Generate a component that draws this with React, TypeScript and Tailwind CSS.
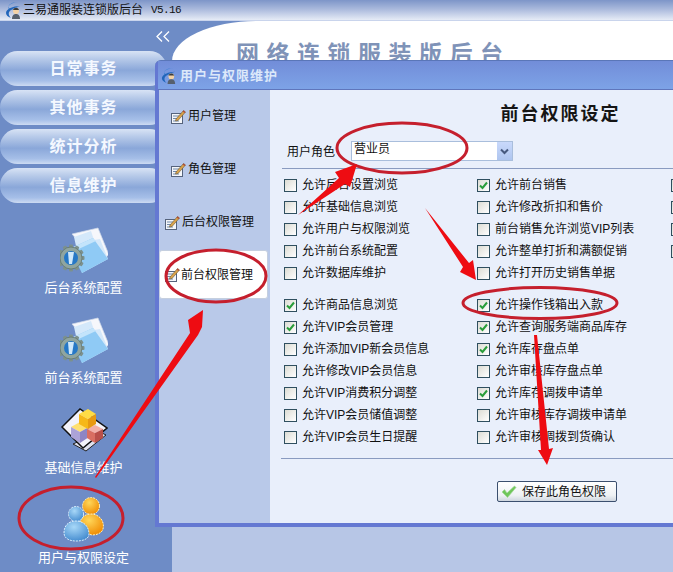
import React from "react";

const Logo = ({ size = 18 }: { size?: number }) => (
  <svg width={size} height={size} viewBox="0 0 18 18">
    <path d="M14 1C8 1 3 4 5 7c2 2 6 0 9-1-3 3-8 3-9 2C3 6 5 2 14 1Z" fill="#3a7fd0" />
    <path d="M16 5C9 5 2 8 2 12c0 2 2 4 5 5-3-3-3-6 0-8 2-2 6-3 9-4Z" fill="#2266bb" />
    <circle cx="12" cy="10" r="3" fill="#f3d2a6" />
    <path d="M8 18c0-4 2-5 4-5s4 1 4 5Z" fill="#56606e" />
    <path d="M9 9c1-3 5-3 6 0Z" fill="#3c3c3c" />
  </svg>
);

const Memo = () => (
  <svg width="15" height="15" viewBox="0 0 15 15" className="shrink-0">
    <rect x="0.5" y="4.5" width="11" height="10" fill="#f4f6fa" stroke="#55637c" />
    <path d="M2 7h6M2 9.500h5M2 12h6" stroke="#7188a8" />
    <path d="M5 10 12.500 1.500 14.500 3 7 11.500 4.500 12Z" fill="#d9a24a" stroke="#6a5a3a" strokeWidth="0.6" />
    <path d="M12.500 1.500 14.500 3 13.500 4 11.600 2.500Z" fill="#b24a3a" />
  </svg>
);

const GearFolder = () => (
  <svg width="48" height="48" viewBox="0 0 48 48">
    <path d="M12 9 38 3l11 27-13 7Z" fill="#f6f7fb" stroke="#cfd8ea" strokeWidth="0.7" />
    <path d="M14 12 31 6l3 9 6-1 8 20-26 14Z" fill="#d4e8fa" />
    <path d="M9 24 33 13l15 21-26 14Z" fill="#8fcaf5" />
    <path d="M9 24 33 13l3 3-24 11Z" fill="#c4e4fb" />
    <g transform="translate(11 33)">
      <g fill="#7c918d">
        {[0, 30, 60, 90, 120, 150].map((a) => (
          <rect key={a} x="-2" y="-13.500" width="4" height="27" rx="1" transform={`rotate(${a})`} />
        ))}
      </g>
      <circle r="11" fill="#8fa5a0" />
      <circle r="11" fill="none" stroke="#62756f" strokeWidth="0.8" />
      <circle r="7" fill="#2678c6" />
      <path d="M-3-6 3-6 1 6-2 6Z" fill="#cfe8fb" />
    </g>
  </svg>
);

const Cubes = () => (
  <svg width="48" height="46" viewBox="0 0 48 46">
    <path d="M13 38 40 26l6 3-20 16Z" fill="#dfe1ee" stroke="#222" strokeWidth="1" />
    <path d="M2 21 20 3l27 19-24 20Z" fill="#f3f3fa" stroke="#111" strokeWidth="1.500" />
    <path d="M11 21l9-5 9 5-9 5Z" fill="#ffe070" />
    <path d="M11 21v10l9 6V26Z" fill="#aca3d8" />
    <path d="M29 21v10l-9 6V26Z" fill="#8d85c4" />
    <path d="M27 23l8-4 8 4-8 4Z" fill="#f3b0a8" />
    <path d="M27 23v9l8 5V27Z" fill="#d96f62" />
    <path d="M43 23v9l-8 5V27Z" fill="#b9504a" />
    <path d="M19 8l9-5 8 5-8 5Z" fill="#ffdc45" />
    <path d="M19 8v10l9 5V13Z" fill="#f6b818" />
    <path d="M36 8v10l-8 5V13Z" fill="#e89a12" />
  </svg>
);

const Users = () => (
  <svg width="42" height="46" viewBox="0 0 42 46">
    <defs>
      <radialGradient id="or" cx="40%" cy="30%" r="75%">
        <stop offset="0" stopColor="#ffd75a" />
        <stop offset="1" stopColor="#f08a00" />
      </radialGradient>
      <radialGradient id="bl" cx="40%" cy="30%" r="80%">
        <stop offset="0" stopColor="#a8d8f8" />
        <stop offset="1" stopColor="#3b85cc" />
      </radialGradient>
    </defs>
    <g stroke="#fff3c0" strokeWidth="1" strokeDasharray="2 1">
      <circle cx="28" cy="10" r="8.500" fill="url(#or)" />
      <path d="M17 36c-2-12 3-18 11-18s14 7 12 15c-1 4-6 6-11 6Z" fill="url(#or)" />
    </g>
    <g stroke="#dbeefc" strokeWidth="1" strokeDasharray="2 1">
      <circle cx="13" cy="18" r="7.500" fill="url(#bl)" />
      <path d="M1 37c0-8 5-12 12-12s13 5 13 13c0 5-6 7-13 7S1 42 1 37Z" fill="url(#bl)" />
    </g>
  </svg>
);

const Check = ({ on }: { on: boolean }) => (
  <span className="w-[13px] h-[13px] shrink-0 border border-[#2f4f5f] bg-[linear-gradient(135deg,#dcdcd4,#ffffff)] flex items-center justify-center">
    {on && (
      <svg width="9" height="9" viewBox="0 0 9 9">
        <path d="M1 4.500 3.500 7 8 1.500" fill="none" stroke="#2a9d3a" strokeWidth="2" />
      </svg>
    )}
  </span>
);

type Item = [string, boolean];

const Row = ({ item }: { item: Item }) => (
  <div className="h-[22px] flex items-center gap-[5px] whitespace-nowrap">
    <Check on={item[1]} />
    <span>{item[0]}</span>
  </div>
);

const col1a: Item[] = [
  ["允许后台设置浏览", false],
  ["允许基础信息浏览", false],
  ["允许用户与权限浏览", false],
  ["允许前台系统配置", false],
  ["允许数据库维护", false],
];
const col1b: Item[] = [
  ["允许商品信息浏览", true],
  ["允许VIP会员管理", true],
  ["允许添加VIP新会员信息", false],
  ["允许修改VIP会员信息", false],
  ["允许VIP消费积分调整", false],
  ["允许VIP会员储值调整", false],
  ["允许VIP会员生日提醒", false],
];
const col2a: Item[] = [
  ["允许前台销售", true],
  ["允许修改折扣和售价", false],
  ["前台销售允许浏览VIP列表", false],
  ["允许整单打折和满额促销", false],
  ["允许打开历史销售单据", false],
];
const col2b: Item[] = [
  ["允许操作钱箱出入款", true],
  ["允许查询服务端商品库存", true],
  ["允许库存盘点单", true],
  ["允许审核库存盘点单", false],
  ["允许库存调拨申请单", true],
  ["允许审核库存调拨申请单", false],
  ["允许审核调拨到货确认", false],
];
const col3: Item[] = [
  ["", false],
  ["", false],
  ["", false],
  ["", false],
];

const pills = ["日常事务", "其他事务", "统计分析", "信息维护"];
const launchers: [string, React.ReactNode][] = [
  ["后台系统配置", <GearFolder />],
  ["前台系统配置", <GearFolder />],
  ["基础信息维护", <Cubes />],
  ["用户与权限设定", <Users />],
];

const Arrow = ({ points }: { points: string }) => <polygon points={points} fill="#ee0c12" />;

export default function App() {
  return (
    <div className="relative w-[673px] h-[572px] overflow-hidden flex flex-col text-[12px] text-[#111] font-['Liberation_Sans','Noto_Sans_CJK_SC',sans-serif]">
      {/* top bar */}
      <header className="h-[21px] shrink-0 flex items-center pl-[4px] gap-[1px] border-b border-[#c9d4ec] bg-[linear-gradient(#7d95c8,#a9b9dc_45%,#e6ebf6)]">
        <Logo />
        <span className="leading-[16px]">三易通服装连锁版后台</span>
        <span className="ml-[7px] font-['Liberation_Mono',monospace] text-[11px] tracking-[-0.6px]">V5.16</span>
      </header>

      <div className="flex-1 flex min-h-0 bg-[#6e8cc6]">
        {/* sidebar */}
        <aside className="w-[172px] shrink-0 flex flex-col text-white">
          <div className="h-[30px] shrink-0 flex items-center justify-end pr-[2px]">
            <svg width="14" height="11" viewBox="0 0 14 11">
              <path d="M6 0.500 1 5.500l5 5M13 0.500l-5 5 5 5" fill="none" stroke="#fff" strokeWidth="1.300" />
            </svg>
          </div>
          <nav className="flex flex-col shrink-0 gap-[4px] w-[167px]">
            {pills.map((p) => (
              <div
                key={p}
                className="h-[35px] shrink-0 rounded-[18px] flex items-center justify-center text-[16px] font-bold tracking-[1px] text-[#f4f8ff] bg-[linear-gradient(#d8e3f5,#b7cae9_22%,#8aa7d9_55%,#a6bfe8_85%,#cddbf2)]"
              >
                {p}
              </div>
            ))}
          </nav>
          <div className="mt-[19px] shrink-0 flex flex-col">
            {launchers.map(([label, icon]) => (
              <div key={label} className="h-[90px] shrink-0 pt-[3px] flex flex-col items-center gap-[6px] w-[167px]">
                <div className="h-[48px] flex items-center justify-center">{icon}</div>
                <span className="text-[13px] leading-[18px] whitespace-nowrap">{label}</span>
              </div>
            ))}
          </div>
        </aside>

        {/* main area */}
        <main className="flex-1 flex flex-col min-w-0">
          <div className="h-[60%] bg-white rounded-tl-[85px_40px] pl-[64px] pt-[19px]">
            <div className="text-[23px] leading-[28px] font-bold tracking-[7.500px] text-[#7f93b8] whitespace-nowrap">
              网络连锁服装版后台
            </div>
          </div>
          <div className="flex-1 bg-[#b7c6e6]" />
        </main>
      </div>

      {/* the dialog window */}
      <section className="absolute left-[155px] top-[60px] w-[600px] h-[467px] flex flex-col bg-[#6478d2] pl-[4px] pb-[4px] rounded-tl-[6px] border-t border-[#5a76b8]">
        <div className="h-[29px] shrink-0 flex items-center gap-[3px] pl-[2px] pt-[1px] text-[13px] font-bold tracking-[1px] text-[#dce8fa] border-b border-[#5f76bc] bg-[linear-gradient(#728dd9,#7da3e7)] -ml-[1px]">
          <Logo size={17} />
          <span>用户与权限维护</span>
        </div>
        <div className="flex-1 flex min-h-0">
          {/* tabs */}
          <div className="w-[111px] shrink-0 bg-[#b9c9e9] flex flex-col pt-[14px]">
            <div className="h-[24px] flex items-center gap-[2px] pl-[12px]"><Memo />用户管理</div>
            <div className="h-[24px] mt-[29px] flex items-center gap-[2px] pl-[12px]"><Memo />角色管理</div>
            <div className="h-[24px] mt-[29px] flex items-center gap-[2px] pl-[6px] whitespace-nowrap"><Memo />后台权限管理</div>
            <div className="h-[49px] mt-[16px] w-[109px] bg-white rounded-[3px] border border-[#c5cfdf] flex items-center gap-[1px] pl-[5px] whitespace-nowrap"><Memo />前台权限管理</div>
          </div>

          {/* form */}
          <div className="flex-1 bg-[#e9effb] pl-[12px] overflow-hidden">
            <h1 className="mt-[14px] w-[391px] h-[20px] leading-[20px] text-center pl-[166px] text-[18px] font-bold tracking-[2px] text-[#151515] whitespace-nowrap">
              前台权限设定
            </h1>
            <div className="mt-[17px] h-[20px] flex items-center pl-[5px]">
              <span className="w-[64px] pt-[1px]">用户角色</span>
              <div className="w-[162px] h-[20px] flex bg-white border border-[#a9bedc]">
                <span className="flex-1 pl-[2px] leading-[15px]">营业员</span>
                <span className="w-[15px] flex items-center justify-center bg-[linear-gradient(#c9d9fb,#aec5ef)]">
                  <svg width="9" height="7" viewBox="0 0 9 7">
                    <path d="M1 1.500 4.500 5 8 1.500" fill="none" stroke="#46597e" strokeWidth="2" />
                  </svg>
                </span>
              </div>
            </div>
            <div className="mt-[7px] h-px bg-[#8a9bc0]" />
            <div className="mt-[5px] pl-[2px] flex">
              <div className="w-[193px] shrink-0 flex flex-col gap-[10px]">
                <div>{col1a.map((i) => <Row key={i[0]} item={i} />)}</div>
                <div>{col1b.map((i) => <Row key={i[0]} item={i} />)}</div>
              </div>
              <div className="w-[194px] shrink-0 flex flex-col gap-[10px]">
                <div>{col2a.map((i) => <Row key={i[0]} item={i} />)}</div>
                <div>{col2b.map((i) => <Row key={i[0]} item={i} />)}</div>
              </div>
              <div>{col3.map((i, n) => <Row key={n} item={i} />)}</div>
            </div>
            <div className="mt-[10px] h-px bg-[#8a9bc0] -ml-[1px]" />
            <button className="mt-[22px] ml-[215px] w-[120px] h-[21px] flex items-center gap-[5px] pl-[3px] rounded-[2px] border border-[#3b4f6e] bg-[linear-gradient(#ffffff,#eef1f4_70%,#cfd6df)] whitespace-nowrap">
              <svg width="16" height="13" viewBox="0 0 16 13">
                <path d="M1 7 3.500 4.500 6 8 13.500 1l1.500 1.500L6.500 12.500Z" fill="#6fc65a" stroke="#a4d99a" strokeWidth="0.7" />
              </svg>
              保存此角色权限
            </button>
          </div>
        </div>
      </section>

      {/* hand-drawn annotations over the screenshot */}
      <svg className="absolute inset-0 pointer-events-none" width="673" height="572" viewBox="0 0 673 572">
        <g fill="none" stroke="#c51f2d" strokeWidth="3">
          <ellipse cx="402" cy="148" rx="65" ry="25" />
          <ellipse cx="216" cy="276" rx="50" ry="26" />
          <ellipse cx="540" cy="303" rx="77" ry="15.500" />
          <ellipse cx="71" cy="518" rx="52" ry="31" />
        </g>
        <Arrow points="298,215 345,184 350,187 357,164 335,172 339,178" />
        <Arrow points="95,477 190,333 188,320 203,310 202,327 198,335 96,478" />
        <Arrow points="425,208 469,263 473,260 476,280 460,272 463,267" />
        <Arrow points="534,335 537,335 549,449 553,448 547,465 538,450 541,450" />
      </svg>
    </div>
  );
}
